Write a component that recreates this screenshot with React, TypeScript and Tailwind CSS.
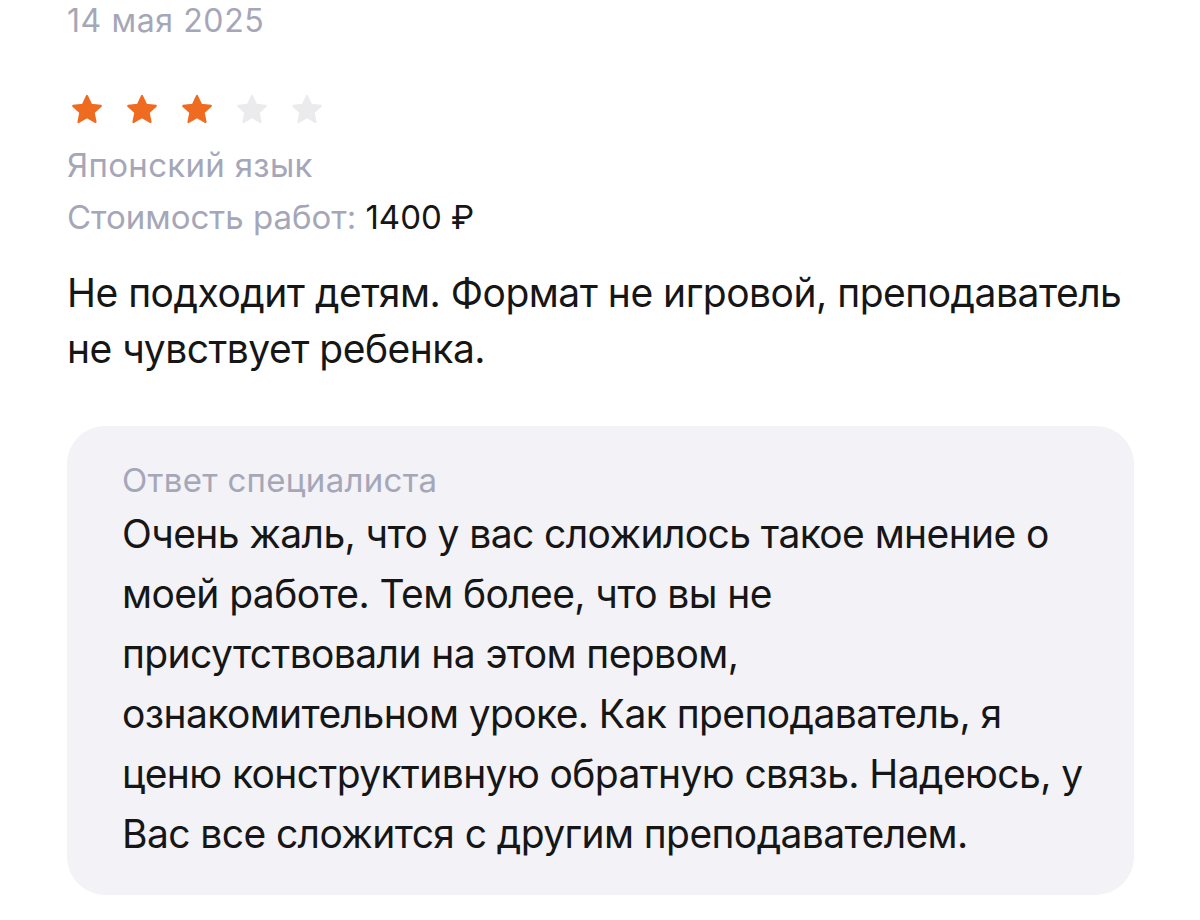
const font = { fontFamily: 'Inter, "Noto Sans", sans-serif' };

function Star({ filled }: { filled: boolean }) {
  return (
    <svg width="36" height="36" viewBox="0 0 24 24">
      <path
        d="M12 2.6l2.75 5.9 6.45.75-4.78 4.4 1.28 6.37L12 16.8l-5.7 3.22 1.28-6.37L2.8 9.25l6.45-.75z"
        fill={filled ? '#ee6b20' : '#ebebee'}
        stroke={filled ? '#ee6b20' : '#ebebee'}
        strokeWidth="1.4"
        strokeLinejoin="round"
      />
    </svg>
  );
}

export default function App() {
  return (
    <div className="min-h-screen bg-white px-[67px]" style={font}>
      <div className="text-[32px] leading-[42px] tracking-[0.6px] text-[#a5a7b8]">14 мая 2025</div>

      <div className="mt-[50px] ml-[2px] flex gap-[19px]">
        <Star filled />
        <Star filled />
        <Star filled />
        <Star filled={false} />
        <Star filled={false} />
      </div>

      <div className="mt-[11px] text-[33px] leading-[52px] tracking-[0.3px] text-[#a5a7b8]">Японский язык</div>
      <div className="text-[33px] leading-[52px] text-[#a5a7b8]">
        Стоимость работ: <span className="text-[#161616]">1400 ₽</span>
      </div>

      <p className="mt-[22px] text-[39px] leading-[56px] tracking-[-0.5px] text-[#161616]">
        Не подходит детям. Формат не игровой, преподаватель
        <br />
        не чувствует ребенка.
      </p>

      <div className="mt-[49px] w-[1067px] rounded-[38px] bg-[#f2f2f7] pl-[55px] pr-[40px] pt-[38px] pb-[31px]">
        <div className="text-[33px] leading-[32px] tracking-[0.3px] text-[#a5a7b8]">Ответ специалиста</div>
        <p className="mt-[8px] text-[39px] leading-[60px] tracking-[-0.6px] text-[#161616]">
          Очень жаль, что у вас сложилось такое мнение о
          <br />
          моей работе. Тем более, что вы не
          <br />
          присутствовали на этом первом,
          <br />
          ознакомительном уроке. Как преподаватель, я
          <br />
          ценю конструктивную обратную связь. Надеюсь, у
          <br />
          Вас все сложится с другим преподавателем.
        </p>
      </div>
    </div>
  );
}
